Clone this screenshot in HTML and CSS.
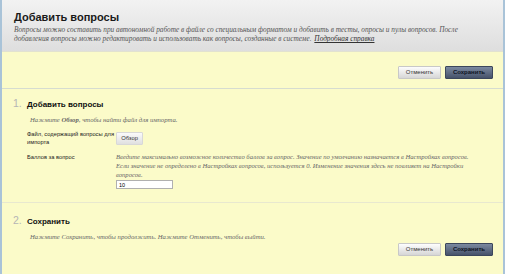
FILE: index.html
```html
<!DOCTYPE html>
<html lang="ru">
<head>
<meta charset="utf-8">
<link rel="stylesheet" href="styles.css">
</head>
<body>
<div class="page">
  <div class="header">
    <h1 class="title">Добавить вопросы</h1>
    <p class="desc">Вопросы можно составить при автономной работе в файле со специальным форматом и добавить в тесты, опросы и пулы вопросов. После добавления вопросы можно редактировать и использовать как вопросы, созданные в системе. <a class="help" href="#">Подробная справка</a></p>
  </div>
  <div class="content">
    <div class="topbar">
      <button class="btn btn-light">Отменить</button>
      <button class="btn btn-dark">Сохранить</button>
    </div>
    <div class="section sec1">
      <div class="sec-head"><span class="num">1.</span><span class="sec-title">Добавить вопросы</span></div>
      <p class="instr">Нажмите <b>Обзор</b>, чтобы найти файл для импорта.</p>
      <div class="row">
        <div class="label">Файл, содержащий вопросы для импорта</div>
        <div class="field"><button class="btn-browse">Обзор</button></div>
      </div>
      <div class="row row2">
        <div class="label">Баллов за вопрос</div>
        <div class="field">
          <p class="hint">Введите максимально возможное количество баллов за вопрос. Значение по умолчанию назначается в Настройках вопросов. Если значение не определено в Настройках вопросов, используется 0. Изменение значения здесь не повлияет на Настройки вопросов.</p>
          <input class="num-input" type="text" value="10">
        </div>
      </div>
    </div>
    <div class="section sec2">
      <div class="sec-head"><span class="num">2.</span><span class="sec-title">Сохранить</span></div>
      <p class="instr">Нажмите Сохранить, чтобы продолжить. Нажмите Отменить, чтобы выйти.</p>
      <div class="bottombar">
        <button class="btn btn-light">Отменить</button>
        <button class="btn btn-dark">Сохранить</button>
      </div>
    </div>
  </div>
</div>
</body>
</html>
```
FILE: styles.css
```css
html, body {
  margin: 0;
  padding: 0;
  width: 505px;
  height: 274px;
  overflow: hidden;
  background: #fbfbc9;
}
.page {
  width: 505px;
  height: 274px;
  box-sizing: border-box;
  border-left: 2px solid #a9c3d8;
  border-right: 2px solid #a9c3d8;
  font-family: "Liberation Sans", Arial, sans-serif;
  display: flex;
  flex-direction: column;
}
.header {
  height: 52px;
  box-sizing: border-box;
  padding: 10px 12px 0 12px;
  background: linear-gradient(#f2f2f2, #dedede);
  border-bottom: 1px solid #e2e2d0;
}
.title {
  margin: 0;
  font-size: 11px;
  font-weight: bold;
  color: #1a1a1a;
  line-height: 14px;
}
.desc {
  margin: 1px 0 0 0;
  font-family: "Liberation Serif", "Times New Roman", serif;
  font-style: italic;
  font-size: 7.3px;
  line-height: 9.4px;
  color: #555;
}
.help {
  margin-left: 1px;
  color: #333;
  text-decoration: underline;
}
.content {
  flex: 1;
  background: #fbfbc9;
}
.topbar {
  display: flex;
  justify-content: flex-end;
  gap: 4px;
  padding: 14px 10px 9px 0;
  border-bottom: 1px solid #d6dcd0;
}
.btn {
  height: 13px;
  padding: 0 4px;
  font-family: "Liberation Sans", Arial, sans-serif;
  font-size: 6px;
  border-radius: 1px;
  line-height: 11px;
}
.btn-light {
  width: 43px;
  background: linear-gradient(#fdfdfd, #d6d6d6);
  border: 1px solid #c8c8c8;
  color: #333;
}
.btn-dark {
  width: 48px;
  background: linear-gradient(#7b89a0, #46526a);
  border: 1px solid #3c475c;
  color: #0e1424;
  font-weight: bold;
}
.section {
  padding: 0 10px 0 11px;
}
.sec1 {
  padding-top: 8px;
  height: 114px;
  box-sizing: border-box;
  border-bottom: 1px solid #e8e8cf;
}
.sec2 {
  padding-top: 11px;
}
.sec-head {
  display: flex;
  align-items: baseline;
  height: 14px;
}
.num {
  width: 14px;
  font-size: 10.5px;
  color: #b5b5b5;
}
.sec-title {
  font-size: 8px;
  font-weight: bold;
  color: #111;
}
.instr {
  margin: 4px 0 0 17px;
  font-family: "Liberation Serif", "Times New Roman", serif;
  font-style: italic;
  font-size: 6.7px;
  color: #666;
  line-height: 10px;
}
.row {
  display: flex;
  margin: 1px 0 0 14px;
}
.row2 {
  margin-top: 6px;
}
.label {
  width: 89px;
  font-size: 5.75px;
  line-height: 8px;
  color: #222;
  padding-top: 4px;
}
.row2 .label {
  padding-top: 1px;
}
.field {
  flex: 1;
}
.btn-browse {
  margin-top: 1px;
  height: 13px;
  width: 27px;
  padding: 0;
  font-family: "Liberation Sans", Arial, sans-serif;
  font-size: 5.8px;
  background: linear-gradient(#fafafa, #e0e0e0);
  border: 1px solid #d8d8d8;
  color: #333;
  border-radius: 1px;
}
.hint {
  margin: 0;
  font-family: "Liberation Serif", "Times New Roman", serif;
  font-style: italic;
  font-size: 6.6px;
  line-height: 9px;
  color: #666;
  width: 360px;
}
.num-input {
  display: block;
  margin-top: 1px;
  width: 57px;
  height: 9px;
  box-sizing: border-box;
  border: 1px solid #b0b0b0;
  background: #fff;
  font-size: 5.5px;
  padding: 0 2px;
  font-family: "Liberation Sans", Arial, sans-serif;
}
.bottombar {
  display: flex;
  justify-content: flex-end;
  gap: 4px;
  margin-top: 1px;
}
```
